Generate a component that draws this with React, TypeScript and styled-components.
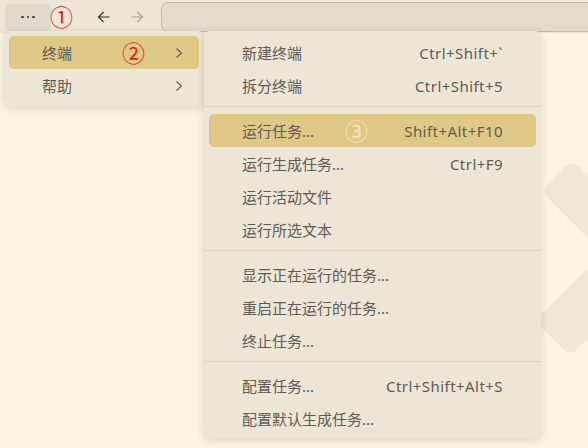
import styled, { createGlobalStyle } from 'styled-components';

const GlobalStyle = createGlobalStyle`
  body {
    margin: 0;
    background: #fcf5e4;
    font-family: "Noto Sans", "Noto Sans CJK SC", sans-serif;
  }
`;

type Entry =
  | { kind: 'item'; label: string; keys?: string; active?: boolean; mark?: string }
  | { kind: 'sep' };

const taskEntries: Entry[] = [
  { kind: 'item', label: '新建终端', keys: 'Ctrl+Shift+`' },
  { kind: 'item', label: '拆分终端', keys: 'Ctrl+Shift+5' },
  { kind: 'sep' },
  { kind: 'item', label: '运行任务...', keys: 'Shift+Alt+F10', active: true, mark: '③' },
  { kind: 'item', label: '运行生成任务...', keys: 'Ctrl+F9' },
  { kind: 'item', label: '运行活动文件' },
  { kind: 'item', label: '运行所选文本' },
  { kind: 'sep' },
  { kind: 'item', label: '显示正在运行的任务...' },
  { kind: 'item', label: '重启正在运行的任务...' },
  { kind: 'item', label: '终止任务...' },
  { kind: 'sep' },
  { kind: 'item', label: '配置任务...', keys: 'Ctrl+Shift+Alt+S' },
  { kind: 'item', label: '配置默认生成任务...' },
];

const Arrow = ({ flip }: { flip?: boolean }) => (
  <svg width="16" height="16" viewBox="0 0 16 16" style={flip ? { transform: 'scaleX(-1)' } : undefined}>
    <path d="M2.5 8h11M7.5 3L2.5 8l5 5" fill="none" stroke="currentColor" strokeWidth="1.1" />
  </svg>
);

const Chevron = () => (
  <svg width="8" height="12" viewBox="0 0 8 12">
    <path d="M1.5 1.5L6.5 6l-5 4.5" fill="none" stroke="currentColor" strokeWidth="1.1" />
  </svg>
);

const App = () => {
  return (
    <Page>
      <GlobalStyle />
      <Watermark width="588" height="448" viewBox="0 0 588 448">
        <g transform="translate(556.5 175.5) rotate(45)">
          <rect x="0" y="-22" width="170" height="44" rx="9" />
        </g>
        <g transform="translate(552.5 338.5) rotate(-45)">
          <rect x="0" y="-25" width="170" height="50" rx="9" />
        </g>
      </Watermark>

      <TitleBar>
        <MoreButton aria-label="More">
          <span />
          <span />
          <span />
        </MoreButton>
        <RedMark>①</RedMark>
        <NavButton aria-label="Back">
          <Arrow />
        </NavButton>
        <NavButton aria-label="Forward" disabled>
          <Arrow flip />
        </NavButton>
        <SearchBox />
      </TitleBar>

      <MainMenu>
        <MenuItem $active>
          <Label>终端</Label>
          <Badge $left={113} $red>②</Badge>
          <Chevron />
        </MenuItem>
        <MenuItem>
          <Label>帮助</Label>
          <Chevron />
        </MenuItem>
      </MainMenu>

      <SubMenu>
        {taskEntries.map((e, i) =>
          e.kind === 'sep' ? (
            <Separator key={i} />
          ) : (
            <SubItem key={i} $active={e.active}>
              <Label>{e.label}</Label>
              {e.mark && <Badge $left={136}>{e.mark}</Badge>}
              {e.keys && <Keys>{e.keys}</Keys>}
            </SubItem>
          )
        )}
      </SubMenu>
    </Page>
  );
};

export default App;

const Page = styled.div`
  position: relative;
  width: 588px;
  height: 448px;
  overflow: hidden;
  background: #fcf5e4;
`;

const Watermark = styled.svg`
  position: absolute;
  left: 0;
  top: 0;
  fill: #f0e8d6;
`;

const TitleBar = styled.header`
  position: relative;
  display: flex;
  align-items: center;
  height: 33px;
  padding-left: 5px;
  background: #eee7d6;
`;

const MoreButton = styled.button`
  display: flex;
  align-items: center;
  justify-content: center;
  gap: 3px;
  width: 46px;
  height: 27px;
  margin-top: 1px;
  padding: 0;
  border: none;
  border-radius: 6px;
  background: #dfdacb;

  span {
    width: 2.5px;
    height: 2.5px;
    border-radius: 50%;
    background: #3f3d39;
  }
`;

const RedMark = styled.span`
  width: 22px;
  margin-left: -1px;
  margin-right: 19px;
  font-family: "Noto Sans CJK SC", sans-serif;
  font-size: 23px;
  line-height: 1;
  color: #e3231b;
`;

const NavButton = styled.button`
  display: flex;
  align-items: center;
  justify-content: center;
  width: 25px;
  height: 25px;
  margin-right: 8px;
  padding: 0;
  border: none;
  background: none;
  color: ${(p) => (p.disabled ? '#a7a196' : '#2e2d2b')};
`;

const SearchBox = styled.div`
  flex: 1;
  height: 28px;
  margin-left: 4px;
  margin-right: -12px;
  margin-top: 1px;
  border: 1px solid #c4bca9;
  border-radius: 7px;
  background: #e3dccb;
`;

const MenuPanel = styled.nav`
  position: absolute;
  top: 31px;
  box-sizing: border-box;
  padding: 5px;
  border-radius: 6px;
  background: #ede6d6;
  box-shadow: 0 2px 8px rgba(70, 55, 20, 0.18);
`;

const MainMenu = styled(MenuPanel)`
  left: 4px;
  width: 200px;
  padding-bottom: 4px;
  z-index: 2;
`;

const SubMenu = styled(MenuPanel)`
  left: 204px;
  width: 337px;
  padding-bottom: 3px;
  z-index: 3;
`;

const MenuItem = styled.div<{ $active?: boolean }>`
  position: relative;
  display: flex;
  align-items: center;
  height: 33px;
  padding: 0 16px 0 33px;
  border-radius: 5px;
  font-size: 15px;
  color: #5f5b55;
  background: ${(p) => (p.$active ? '#dfc987' : 'transparent')};
`;

const SubItem = styled(MenuItem)`
  padding: 0 33px;
`;

const Label = styled.span`
  flex: 1;
  white-space: nowrap;
`;

const Keys = styled.span`
  white-space: nowrap;
  letter-spacing: 0.45px;
`;

const Badge = styled.span<{ $left: number; $red?: boolean }>`
  position: absolute;
  top: 5px;
  left: ${(p) => p.$left}px;
  font-family: "Noto Sans CJK SC", sans-serif;
  font-size: 23px;
  line-height: 1;
  color: ${(p) => (p.$red ? '#e3231b' : '#efe5c2')};
`;

const Separator = styled.div`
  height: 1px;
  margin: 4px -5px 7px;
  background: #d5d2cf;
`;
